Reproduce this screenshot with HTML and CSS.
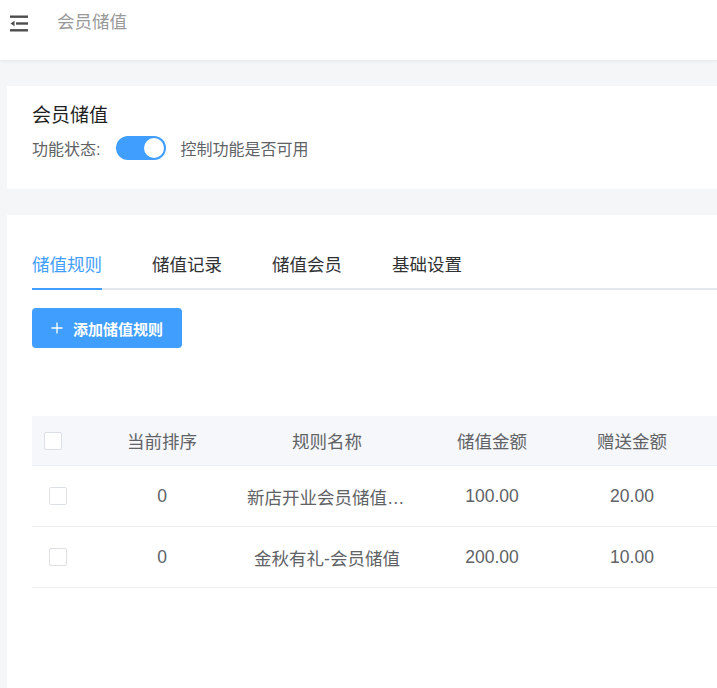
FILE: index.html
```html
<!DOCTYPE html>
<html lang="zh">
<head>
<meta charset="utf-8">
<title>会员储值</title>
<link rel="stylesheet" href="styles.css">
</head>
<body>
<header class="topbar">
  <svg class="menu-icon" width="18" height="17" viewBox="0 0 18 17">
    <rect x="0" y="0.5" width="18" height="2.4" fill="#4d4d4d"/>
    <rect x="6" y="7.3" width="12" height="2.4" fill="#4d4d4d"/>
    <path d="M0.5 8.5 L4.5 5.8 L4.5 11.2 Z" fill="#4d4d4d"/>
    <rect x="0" y="14.1" width="18" height="2.4" fill="#4d4d4d"/>
  </svg>
  <span class="crumb">会员储值</span>
</header>
<main class="main">
  <section class="card status-card">
    <h2 class="card-title">会员储值</h2>
    <div class="status-row">
      <span class="status-label">功能状态:</span>
      <span class="switch"><span class="knob"></span></span>
      <span class="status-desc">控制功能是否可用</span>
    </div>
  </section>
  <section class="card content-card">
    <nav class="tabs">
      <span class="tab active">储值规则</span>
      <span class="tab">储值记录</span>
      <span class="tab">储值会员</span>
      <span class="tab">基础设置</span>
    </nav>
    <button class="btn-add">
      <svg class="plus" width="12" height="12" viewBox="0 0 12 12"><path d="M6 0.5 V11.5 M0.5 6 H11.5" stroke="#fff" stroke-width="1.3" fill="none"/></svg>
      添加储值规则
    </button>
    <table class="table">
      <colgroup>
        <col class="c-check"><col class="c-sort"><col class="c-name"><col class="c-amt"><col class="c-gift"><col class="c-rest">
      </colgroup>
      <thead>
        <tr>
          <th class="cell-check head"><span class="checkbox"></span></th>
          <th>当前排序</th>
          <th>规则名称</th>
          <th>储值金额</th>
          <th>赠送金额</th>
          <th></th>
        </tr>
      </thead>
      <tbody>
        <tr>
          <td class="cell-check"><span class="checkbox"></span></td>
          <td>0</td>
          <td><div class="ellipsis" title="新店开业会员储值活动">新店开业会员储值活动</div></td>
          <td>100.00</td>
          <td>20.00</td>
          <td></td>
        </tr>
        <tr>
          <td class="cell-check"><span class="checkbox"></span></td>
          <td>0</td>
          <td><div class="ellipsis">金秋有礼-会员储值</div></td>
          <td>200.00</td>
          <td>10.00</td>
          <td></td>
        </tr>
      </tbody>
    </table>
  </section>
</main>
</body>
</html>
```

FILE: styles.css
```css
html, body {
  margin: 0;
  padding: 0;
  overflow: hidden;
  background: #f5f6f8;
  font-family: "Liberation Sans", "Noto Sans CJK SC", sans-serif;
}

.topbar {
  height: 60px;
  background: #fff;
  box-shadow: 0 1px 4px rgba(0, 21, 41, 0.08);
  display: flex;
  align-items: flex-start;
  padding-left: 10px;
  position: relative;
  z-index: 1;
}

.menu-icon {
  display: block;
  margin-top: 15px;
}

.crumb {
  margin-left: 29px;
  font-size: 17.5px;
  line-height: 24px;
  color: #999;
  margin-top: 10px;
}

.main {
  padding: 26px 0 0 7px;
  display: flex;
  flex-direction: column;
  gap: 26px;
}

.card {
  background: #fff;
}

.status-card {
  height: 103px;
  padding: 17px 25px 0;
  box-sizing: border-box;
}

.card-title {
  margin: 0;
  font-size: 19px;
  font-weight: normal;
  color: #1f1f1f;
  line-height: 26px;
}

.status-row {
  display: flex;
  align-items: center;
  margin-top: 7px;
  font-size: 16px;
  color: #606266;
}

.switch {
  width: 50px;
  height: 24px;
  border-radius: 12px;
  background: #409eff;
  margin-left: 16px;
  position: relative;
}

.knob {
  position: absolute;
  right: 2px;
  top: 2px;
  width: 20px;
  height: 20px;
  border-radius: 50%;
  background: #fff;
}

.status-desc {
  margin-left: 14px;
}

.content-card {
  padding: 37px 0 120px 25px;
  min-height: 500px;
}

.tabs {
  display: flex;
  gap: 50px;
  border-bottom: 2px solid #e4e7ed;
  height: 36px;
}

.tab {
  font-size: 17.5px;
  color: #303133;
  line-height: 26px;
  position: relative;
}

.tab.active {
  color: #409eff;
}

.tab.active::after {
  content: "";
  position: absolute;
  left: 0;
  right: 0;
  bottom: -2px;
  height: 2px;
  background: #409eff;
}

.btn-add {
  margin-top: 18px;
  width: 150px;
  height: 40px;
  background: #409eff;
  border: none;
  border-radius: 4px;
  color: #fff;
  font-family: inherit;
  font-size: 15px;
  font-weight: bold;
  display: flex;
  align-items: center;
  justify-content: center;
  gap: 10px;
  padding: 0;
}

.plus {
  display: block;
}

.table {
  margin-top: 68px;
  border-collapse: collapse;
  table-layout: fixed;
  width: 770px;
  font-size: 17.5px;
  color: #606266;
}

.c-check { width: 60px; }
.c-sort { width: 140px; }
.c-name { width: 190px; }
.c-amt { width: 140px; }
.c-gift { width: 140px; }
.c-rest { width: 100px; }

.table th {
  height: 49px;
  background: #f5f7fa;
  font-weight: normal;
  text-align: center;
  border-bottom: 1px solid #ebeef5;
  padding: 0;
}

.table td {
  height: 60px;
  text-align: center;
  border-bottom: 1px solid #ebeef5;
  padding: 0;
}

.cell-check {
  text-align: left !important;
  padding-left: 17px !important;
}

.cell-check.head {
  padding-left: 12px !important;
}

.checkbox {
  display: block;
  width: 16px;
  height: 16px;
  border: 1px solid #dcdfe6;
  border-radius: 2px;
  background: #fff;
}

.ellipsis {
  width: 160px;
  margin: 0 auto;
  white-space: nowrap;
  overflow: hidden;
  text-overflow: ellipsis;
}
```
